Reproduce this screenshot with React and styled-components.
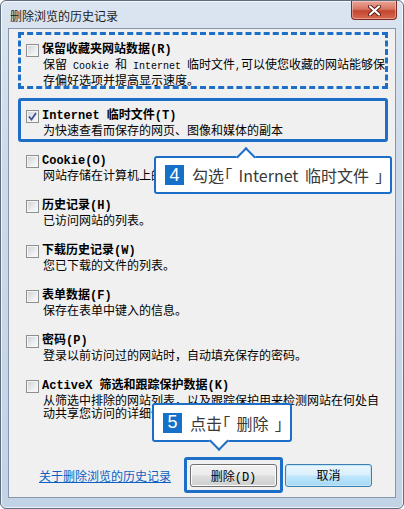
import React from "react";
import styled, { createGlobalStyle } from "styled-components";

const CJK = `"Noto Sans CJK SC", "Liberation Sans", sans-serif`;
const MONO = `"Liberation Mono", "Noto Sans CJK SC", monospace`;
const BLUE = "#1c6ec6";

const GlobalStyle = createGlobalStyle`
  body {
    margin: 0;
    background: #fff;
  }
  * {
    box-sizing: border-box;
  }
`;

const Window = styled.div`
  width: 404px;
  height: 509px;
  display: flex;
  flex-direction: column;
  border: 1px solid #5f6d7e;
  border-radius: 6px;
  background: linear-gradient(180deg, #dbe5f1 0%, #cddaea 30%, #c3d3e6 100%);
  box-shadow: inset 0 0 0 1px rgba(255, 255, 255, 0.7);
  padding: 0 7px 10px;
`;

const TitleBar = styled.div`
  height: 27px;
  display: flex;
  justify-content: space-between;
  align-items: flex-start;
`;

const Title = styled.span`
  font-family: ${CJK};
  font-size: 12px;
  line-height: 30px;
  color: #1b1b1b;
  padding-left: 2px;
`;

const CloseButton = styled.div`
  width: 46px;
  height: 19px;
  margin-right: -1px;
  display: flex;
  align-items: center;
  justify-content: center;
  border: 1px solid #7d2b22;
  border-top: none;
  border-radius: 0 0 4px 4px;
  background: linear-gradient(180deg, #e9a597 0%, #d87562 45%, #c34631 55%, #d9694e 100%);
  box-shadow: inset 0 0 0 1px rgba(255, 255, 255, 0.35);
`;

const Panel = styled.div`
  flex: 1;
  position: relative;
  display: flex;
  flex-direction: column;
  background: #f0f0f0;
  border: 1px solid #8797ab;
  padding: 3px 7px 4px 9px;
`;

const Options = styled.div`
  display: flex;
  flex-direction: column;
`;

const Option = styled.div`
  margin-top: ${(p) => p.$gap}px;
  padding: ${(p) =>
    p.$frame === "dashed" ? "8px 5px 0" : p.$frame === "solid" ? "8px 5px 3px" : "0 8px"};
  border: ${(p) =>
    p.$frame === "dashed"
      ? `3px dashed ${BLUE}`
      : p.$frame === "solid"
      ? `3px solid ${BLUE}`
      : "none"};
  border-radius: ${(p) => (p.$frame === "solid" ? "3px" : "0")};
`;

const Head = styled.div`
  display: flex;
  align-items: center;
  gap: 3px;
  height: 14px;
`;

const Box = styled.span`
  flex: none;
  width: 13px;
  height: 13px;
  display: flex;
  align-items: center;
  justify-content: center;
  border: 1px solid #8e8f8f;
  background: linear-gradient(135deg, #cdd0d5 0%, #eceef0 60%, #fbfbfb 100%);
  box-shadow: inset 0 0 0 1px #f6f6f6;
`;

const Label = styled.span`
  font-family: ${MONO};
  font-weight: bold;
  font-size: 12px;
  line-height: 14px;
  color: #000;
  white-space: nowrap;
`;

const Desc = styled.div`
  margin-right: -12px;
  padding-left: 17px;
  font-family: ${CJK};
  font-size: 12px;
  line-height: 13px;
  color: #000;
  white-space: nowrap;
  overflow: ${(p) => (p.$clip ? "hidden" : "visible")};
`;

const Latin = styled.span`
  font-family: "Liberation Mono", monospace;
  font-size: 10px;
`;

const Footer = styled.div`
  margin-top: auto;
  display: flex;
  align-items: center;
`;

const HelpLink = styled.a`
  margin-left: 21px;
  font-family: ${CJK};
  font-size: 12px;
  color: #0a5fc4;
  text-decoration: underline;
  cursor: pointer;
`;

const ButtonFrame = styled.div`
  margin-left: auto;
  padding: 4px 3px 3px;
  border: 3px solid ${BLUE};
  border-radius: 3px;
`;

const Button = styled.button`
  width: 87px;
  height: 23px;
  margin: 0 ${(p) => (p.$primary ? "16px" : "0")} 0 ${(p) => (p.$primary ? "2px" : "0")};
  padding: 0;
  font-family: ${MONO};
  font-size: 12px;
  color: #000;
  border-radius: 3px;
  border: 1px solid ${(p) => (p.$primary ? "#3c7fb1" : "#707070")};
  background: ${(p) =>
    p.$primary
      ? "linear-gradient(180deg, #eaf6fd 0%, #d9f0fc 48%, #bee6fd 52%, #a7d9f5 100%)"
      : "linear-gradient(180deg, #f2f2f2 0%, #ebebeb 48%, #dddddd 52%, #cfcfcf 100%)"};
  box-shadow: inset 0 0 0 1px ${(p) => (p.$primary ? "#c4e5f6" : "#fcfcfc")};
`;

const Callout = styled.div`
  position: absolute;
  left: ${(p) => p.$x}px;
  top: ${(p) => p.$y}px;
  width: ${(p) => p.$w}px;
  height: ${(p) => p.$h}px;
  display: flex;
  align-items: center;
  gap: 8px;
  padding-left: 9px;
  background: #fff;
  border: 2px solid ${BLUE};
  border-radius: 3px;
  font-family: ${CJK};
  font-size: 16px;
  font-feature-settings: "palt";
  color: #383838;
  white-space: nowrap;

  &::after {
    content: "";
    position: absolute;
    left: ${(p) => p.$notch}px;
    ${(p) => (p.$down ? "bottom: -8px;" : "top: -8px;")}
    width: 12px;
    height: 12px;
    background: #fff;
    border: 2px solid ${BLUE};
    ${(p) =>
      p.$down
        ? "border-top: none; border-left: none;"
        : "border-bottom: none; border-right: none;"}
    transform: rotate(45deg);
  }
`;

const CalloutText = styled.span`
  word-spacing: 3px;
`;

const Step = styled.span`
  flex: none;
  width: 19px;
  height: 20px;
  display: flex;
  align-items: center;
  justify-content: center;
  background: #1570c8;
  color: #fff;
  font-family: "Liberation Sans", sans-serif;
  font-size: 18px;
`;

const CheckBox = ({ checked }) => (
  <Box>
    {checked && (
      <svg width="9" height="9" viewBox="0 0 9 9">
        <path d="M1 4.5 L3.5 7.5 L8 1" fill="none" stroke="#3d4f92" strokeWidth="1.7" />
      </svg>
    )}
  </Box>
);

const options = [
  {
    label: "保留收藏夹网站数据(R)",
    frame: "dashed",
    gap: 0,
    desc: [
      <>
        保留<Latin> Cookie </Latin>和<Latin> Internet </Latin>临时文件<Latin>,</Latin>可以使您收藏的网站能够保
      </>,
      "存偏好选项并提高显示速度。",
    ],
  },
  {
    label: "Internet 临时文件(T)",
    frame: "solid",
    gap: 9,
    checked: true,
    desc: ["为快速查看而保存的网页、图像和媒体的副本"],
  },
  {
    label: "Cookie(O)",
    gap: 12,
    clip: true,
    desc: ["网站存储在计算机上的文件或数据库，以保存如首选项之类的信息或改进网站性能。"],
  },
  { label: "历史记录(H)", gap: 18, desc: ["已访问网站的列表。"] },
  { label: "下载历史记录(W)", gap: 18, desc: ["您已下载的文件的列表。"] },
  { label: "表单数据(F)", gap: 18, desc: ["保存在表单中键入的信息。"] },
  { label: "密码(P)", gap: 18, desc: ["登录以前访问过的网站时，自动填充保存的密码。"] },
  {
    label: "ActiveX 筛选和跟踪保护数据(K)",
    gap: 18,
    desc: ["从筛选中排除的网站列表，以及跟踪保护用来检测网站在何处自", "动共享您访问的详细信息。"],
  },
];

export default function App() {
  return (
    <>
      <GlobalStyle />
      <Window>
        <TitleBar>
          <Title>删除浏览的历史记录</Title>
          <CloseButton>
            <svg width="13" height="11" viewBox="0 0 13 11">
              <path d="M2 1.5 L11 9.5 M11 1.5 L2 9.5" stroke="#5a1a12" strokeWidth="4" strokeLinecap="round" />
              <path d="M2 1.5 L11 9.5 M11 1.5 L2 9.5" stroke="#fff" strokeWidth="2.2" strokeLinecap="round" />
            </svg>
          </CloseButton>
        </TitleBar>
        <Panel>
          <Options>
            {options.map((o) => (
              <Option key={o.label} $frame={o.frame} $gap={o.gap}>
                <Head>
                  <CheckBox checked={o.checked} />
                  <Label>{o.label}</Label>
                </Head>
                {o.desc.map((line, i) => (
                  <Desc key={i} $clip={o.clip}>
                    {line}
                  </Desc>
                ))}
              </Option>
            ))}
          </Options>
          <Footer>
            <HelpLink>关于删除浏览的历史记录</HelpLink>
            <ButtonFrame>
              <Button>删除(D)</Button>
            </ButtonFrame>
            <Button $primary>取消</Button>
          </Footer>
          <Callout $x={145} $y={127} $w={238} $h={38} $notch={83}>
            <Step>4</Step>
            <CalloutText>勾选「 Internet 临时文件 」</CalloutText>
          </Callout>
          <Callout $x={143} $y={374} $w={140} $h={39} $notch={58} $down>
            <Step>5</Step>
            <CalloutText>点击「 删除 」</CalloutText>
          </Callout>
        </Panel>
      </Window>
    </>
  );
}
